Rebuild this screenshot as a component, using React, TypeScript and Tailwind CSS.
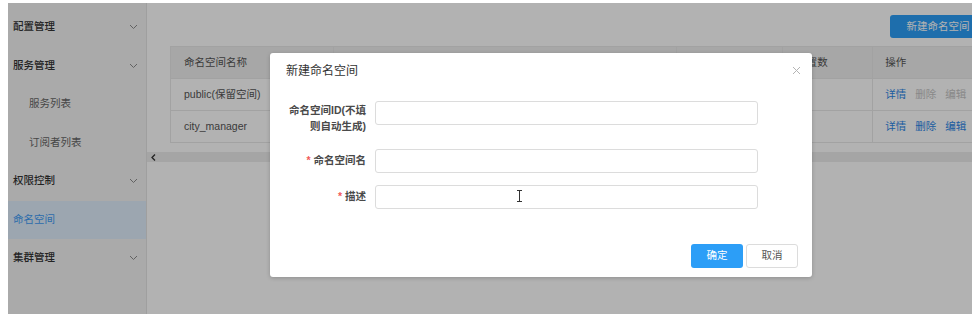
import React from "react";

const font = { fontFamily: '"Liberation Sans", "Noto Sans CJK SC", sans-serif' };

const menu = [
  { label: "配置管理", sub: false, arrow: true },
  { label: "服务管理", sub: false, arrow: true },
  { label: "服务列表", sub: true, arrow: false },
  { label: "订阅者列表", sub: true, arrow: false },
  { label: "权限控制", sub: false, arrow: true },
  { label: "命名空间", sub: false, arrow: false, active: true },
  { label: "集群管理", sub: false, arrow: true },
];

function Chevron() {
  return (
    <svg width="9" height="6" viewBox="0 0 9 6" className="text-[#8c8c8c]">
      <polyline points="1,1 4.5,4.5 8,1" fill="none" stroke="currentColor" strokeWidth="1" />
    </svg>
  );
}

function Sidebar() {
  return (
    <aside className="w-[139px] shrink-0 bg-[#f4f4f4] border-r border-[#e4e4e4] pt-[5px]">
      {menu.map((m) => (
        <div
          key={m.label}
          className={`h-[38.5px] flex items-center justify-between pr-[8px] ${m.sub ? "pl-[21px] text-[#666]" : "pl-[5px] text-[#333] font-medium"} ${m.active ? "bg-[#e0eefc] !text-[#3f9cf5] !font-normal" : ""}`}
        >
          <span className="text-[10.5px]">{m.label}</span>
          {m.arrow && <Chevron />}
        </div>
      ))}
    </aside>
  );
}

const cols = [163, 344, 106, 90, 130];

function Actions({ disabled }: { disabled?: boolean }) {
  const other = disabled ? "text-[#c4c4c4]" : "text-[#2a86e6]";
  return (
    <div className="flex gap-[9px] text-[10.5px]">
      <span className="text-[#2a86e6]">详情</span>
      <span className={other}>删除</span>
      <span className={other}>编辑</span>
    </div>
  );
}

function Table() {
  const rows = [
    { name: "public(保留空间)", disabled: true },
    { name: "city_manager", disabled: false },
  ];
  return (
    <div className="ml-[23px] mt-[8px] w-[833px] border-l border-t border-[#e8e8e8] text-[10.5px]">
      <div className="flex h-[32px] bg-[#f0f0f0] border-b border-[#e8e8e8] text-[#555]">
        {["命名空间名称", "", "", "配置数", "操作"].map((h, i) => (
          <div
            key={i}
            style={{ width: cols[i] }}
            className={`flex items-center border-r border-[#e8e8e8] ${i === 4 ? "pl-[12px]" : "pl-[13px]"}`}
          >
            {h}
          </div>
        ))}
      </div>
      {rows.map((r) => (
        <div key={r.name} className="flex h-[32px] border-b border-[#e8e8e8] text-[#555]">
          {cols.map((w, i) => (
            <div key={i} style={{ width: w }} className={`flex items-center ${i === 3 ? "border-r border-[#e8e8e8]" : ""} ${i === 4 ? "pl-[12px]" : "pl-[13px]"}`}>
              {i === 0 && r.name}
              {i === 4 && <Actions disabled={r.disabled} />}
            </div>
          ))}
        </div>
      ))}
    </div>
  );
}

function Dialog() {
  return (
    <div className="absolute left-[262px] top-[50px] w-[542px] h-[224px] bg-white rounded-[3px] shadow-[0_1px_4px_rgba(0,0,0,0.2)] flex flex-col">
      <div className="flex items-center justify-between pl-[16px] pr-[11px] pt-[11px]">
        <span className="text-[12px] leading-[14px] text-[#333]">新建命名空间</span>
        <svg width="9" height="9" viewBox="0 0 9 9" className="text-[#b4b4b4] mt-[-2px]">
          <path d="M1 1 L8 8 M8 1 L1 8" stroke="currentColor" strokeWidth="1" />
        </svg>
      </div>

      <div className="mt-[23px] flex flex-col text-[10.5px]">
        <div className="flex items-start gap-[9px]">
          <div className="w-[96px] text-right leading-[16px] pt-[1px] font-semibold text-[#4a4a4a]">
            命名空间ID(不填
            <br />
            则自动生成)
          </div>
          <div className="w-[383px] h-[24px] border border-[#dcdcdc] rounded-[3px]" />
        </div>
        <div className="flex items-center gap-[9px] mt-[15px]">
          <div className="w-[96px] text-right font-semibold text-[#4a4a4a]">
            <span className="text-[#f25a5a] mr-[3px]">*</span>命名空间名
          </div>
          <div className="w-[383px] h-[24px] border border-[#dcdcdc] rounded-[3px]" />
        </div>
        <div className="flex items-center gap-[9px] mt-[12px]">
          <div className="w-[96px] text-right font-semibold text-[#4a4a4a]">
            <span className="text-[#f25a5a] mr-[3px]">*</span>描述
          </div>
          <div className="relative w-[383px] h-[24px] border border-[#dcdcdc] rounded-[3px]">
            <svg width="7" height="12" viewBox="0 0 7 12" className="absolute left-[140px] top-[4px] text-[#333]">
              <path d="M1 0.5 H6 M1 11.5 H6 M3.5 0.5 V11.5" stroke="currentColor" strokeWidth="1" fill="none" />
            </svg>
          </div>
        </div>
      </div>

      <div className="mt-auto mb-[9px] mr-[14px] flex justify-end gap-[3px] text-[10.5px]">
        <button className="w-[52px] h-[24px] rounded-[3px] bg-[#2c9ef7] text-white">确定</button>
        <button className="w-[52px] h-[24px] rounded-[3px] border border-[#dcdcdc] bg-white text-[#555]">取消</button>
      </div>
    </div>
  );
}

export default function App() {
  return (
    <div className="w-[978px] h-[314px] bg-white pt-[3px] pl-[8px] pr-[6px] overflow-hidden" style={font}>
      <div className="relative flex h-full overflow-hidden">
        <Sidebar />
        <main className="flex-1 min-w-0 bg-white overflow-hidden">
          <div className="flex justify-end mt-[12px] mr-[-14px]">
            <button className="w-[96px] h-[23px] rounded-[3px] bg-[#2c9ef7] text-white text-[10.5px]">新建命名空间</button>
          </div>
          <Table />
          <div className="mt-[9px] h-[10px] bg-[#ececec] flex items-center pl-[4px]">
            <svg width="5" height="7" viewBox="0 0 5 7">
              <polyline points="4,0.5 1,3.5 4,6.5" fill="none" stroke="#333" strokeWidth="1.3" />
            </svg>
          </div>
        </main>
        <div className="absolute inset-0 bg-black/30" />
        <Dialog />
      </div>
    </div>
  );
}
